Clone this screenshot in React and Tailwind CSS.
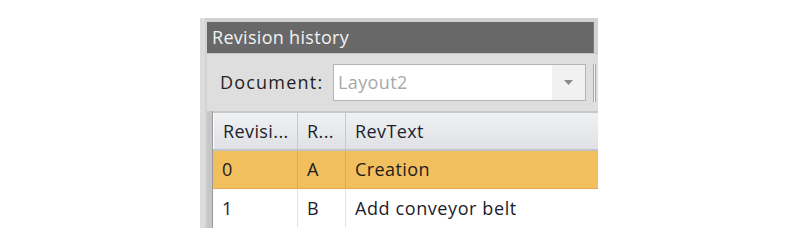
import React from "react";

export default function App() {
  const font = { fontFamily: '"Open Sans", "DejaVu Sans", sans-serif' };
  return (
    <div className="w-[800px] h-[250px] bg-white pt-[18px] pl-[200px]" style={font}>
      <div className="w-[398px] h-[210px] bg-[#d2d2d2] flex flex-col border-l-[5px] border-[#dcdcdc]">
        <div className="flex pt-[4px] pl-[2px] pr-[4px]">
          <div className="flex-1 h-[31px] bg-[#686868] flex items-center pl-[5px] text-[18px] tracking-[0.3px] text-[#f2f2f2] border-r border-[#7a7a7a]">
            Revision history
          </div>
        </div>
        <div className="h-[58px] flex items-center bg-[#dedede] ml-[2px] border-t border-[#c4c4c4]">
          <span className="ml-[13px] w-[113px] text-[18px] tracking-[1.2px] text-[#1e1e1e]">Document:</span>
          <div className="w-[253px] h-[37px] bg-white border border-[#b4b4b4] flex items-center">
            <span className="flex-1 pl-[4px] text-[18px] tracking-[0.4px] text-[#a8a8a8]">Layout2</span>
            <div className="w-[33px] h-full bg-[#f1f1f1] flex items-center justify-center">
              <svg width="9" height="5" viewBox="0 0 9 5"><path d="M0 0h9L4.5 5z" fill="#8a8a8a" /></svg>
            </div>
          </div>
          <div className="ml-[7px] w-[3px] h-[38px] border-x border-[#a8a8a8] bg-[#f4f4f4]" />
        </div>
        <div className="flex flex-1 ml-[2px]">
          <div className="w-[6px] bg-[#c6c6c6] border-r border-[#9a9a9a]" />
          <div className="flex-1 flex flex-col bg-white border-t-2 border-[#c8c8c8]">
            <div className="flex h-[38px] bg-gradient-to-b from-[#f0f1f3] to-[#dfe1e5] border-b-2 border-[#c2c4c8] text-[18px] tracking-[0.4px] text-[#1e1e2e]">
              <div className="w-[85px] flex items-center pl-[9px] border-r border-[#c6c8cc] border-l border-l-white">Revisi...</div>
              <div className="w-[48px] flex items-center pl-[9px] border-r border-[#c6c8cc]">R...</div>
              <div className="flex-1 flex items-center pl-[9px]">RevText</div>
            </div>
            <div className="flex h-[38px] bg-[#f2bf5f] border-b border-[#eaa650] text-[18px] tracking-[0.4px] text-[#1c1c1c]">
              <div className="w-[85px] flex items-center pl-[9px] border-r border-[#e9a34a]">0</div>
              <div className="w-[48px] flex items-center pl-[9px] border-r border-[#e9a34a]">A</div>
              <div className="flex-1 flex items-center pl-[9px]">Creation</div>
            </div>
            <div className="flex h-[38px] bg-white text-[18px] tracking-[0.6px] text-[#1c1c2c]">
              <div className="w-[85px] flex items-center pl-[9px] border-r border-[#e2e2e2]">1</div>
              <div className="w-[48px] flex items-center pl-[9px] border-r border-[#e2e2e2]">B</div>
              <div className="flex-1 flex items-center pl-[9px]">Add conveyor belt</div>
            </div>
          </div>
        </div>
      </div>
    </div>
  );
}
